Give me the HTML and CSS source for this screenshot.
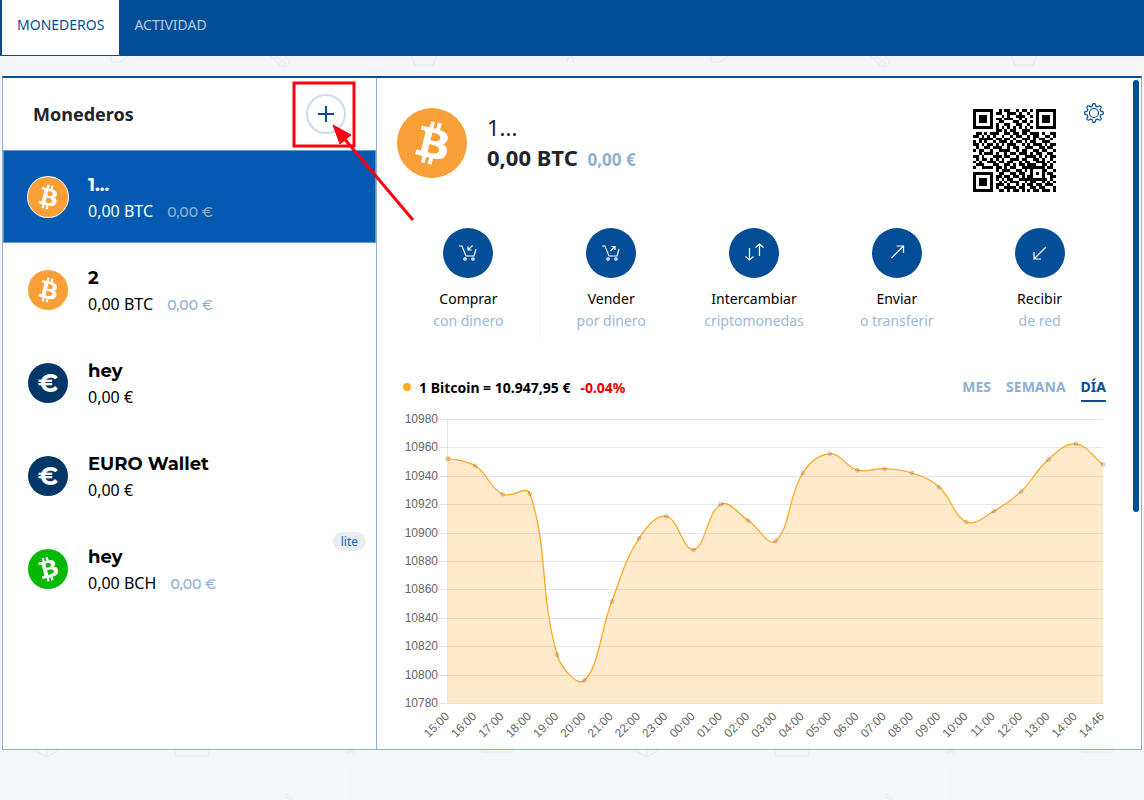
FILE: index.html
```html
<!DOCTYPE html>
<html lang="es">
<head>
    <title>Monederos</title>
    <meta charset="UTF-8">
    <meta name="viewport" content="width=device-width, initial-scale=1.0">
    <link rel="stylesheet" href="styles.css">
</head>
<body>
    <svg class="backdrop" aria-hidden="true">
        <defs>
            <pattern id="doodles" width="600" height="800" patternUnits="userSpaceOnUse">
                <g fill="none" stroke="#e2e9f3" stroke-width="1">
                    <path d="M111 50v12h6q9 0 11-8"/>
                    <path d="M268 54l14 13M272 52l14 12M282 67q6 0 8-6l-8-8M274 60l3-3M278 64l3-3M282 66l3-3"/>
                    <path d="M412 50v9l3 6h18l3-6v-9"/>
                    <path d="M566 59l5-3 6 3M569 57l-2 5M572 57l2 6"/>
                    <path d="M32 749l15 8 13-8M47 749v8"/>
                    <path d="M175 749v4q0 3 4 3h30v-8"/>
                    <path d="M346 754l5-4 6 4M349 750l1 4M352 752l2 5"/>
                    <path d="M482 749v3h31v-3"/>
                    <path d="M285 794q5 0 7 6M285 797q3 0 4 3"/>
                    <path d="M350 764v36M435 750l50 50" stroke-dasharray="1 3"/>
                </g>
            </pattern>
        </defs>
        <rect width="100%" height="100%" fill="url(#doodles)"/>
    </svg>

    <svg class="symbols" aria-hidden="true">
        <symbol id="btc" viewBox="0 0 32 32">
            <path fill="#fff" fill-rule="evenodd" d="M23.189 14.02c.314-2.096-1.283-3.223-3.465-3.975l.708-2.84-1.728-.43-.69 2.765c-.454-.114-.92-.22-1.385-.326l.695-2.783L15.596 6l-.708 2.839c-.376-.086-.746-.17-1.104-.26l.002-.009-2.384-.595-.46 1.846s1.283.294 1.256.312c.7.175.826.638.805 1.006l-.806 3.235c.048.012.11.03.18.057l-.183-.045-1.13 4.532c-.086.212-.303.531-.793.41.018.025-1.256-.313-1.256-.313l-.858 1.978 2.25.561c.418.105.828.215 1.231.318l-.715 2.872 1.727.43.708-2.84c.472.127.93.245 1.378.357l-.706 2.828 1.728.43.715-2.866c2.948.558 5.164.333 6.097-2.333.752-2.146-.037-3.385-1.588-4.192 1.13-.26 1.98-1.003 2.207-2.538zm-3.95 5.538c-.533 2.147-4.148.986-5.32.695l.95-3.805c1.172.293 4.929.872 4.37 3.11zm.535-5.569c-.487 1.953-3.495.96-4.47.717l.86-3.45c.975.243 4.118.696 3.61 2.733z"/>
        </symbol>
        <symbol id="cart" viewBox="0 0 20 20">
            <path d="M1 3h3l4 10h8l2-7"/>
            <circle cx="7" cy="16" r="1.2"/>
            <circle cx="15" cy="16" r="1.2"/>
        </symbol>
    </svg>

    <header class="topbar">
        <nav class="tabs">
            <a href="#monederos" class="tab active">MONEDEROS</a>
            <a href="#actividad" class="tab">ACTIVIDAD</a>
        </nav>
    </header>

    <main class="panel">
        <aside class="sidebar">
            <div class="sidebar-header">
                <h1>Monederos</h1>
                <button class="add-button" aria-label="Añadir monedero">
                    <svg width="16" height="16" viewBox="0 0 16 16"><path d="M8 0v16M0 8h16"/></svg>
                </button>
            </div>
            <ul class="wallet-list">
                <li>
                    <a href="#w1" class="wallet active">
                        <span class="coin btc"><svg><use href="#btc"/></svg></span>
                        <span class="wallet-info">
                            <span class="wallet-name">1...</span>
                            <span class="wallet-amount">0,00 BTC <span class="fiat">0,00 €</span></span>
                        </span>
                    </a>
                </li>
                <li>
                    <a href="#w2" class="wallet">
                        <span class="coin btc"><svg><use href="#btc"/></svg></span>
                        <span class="wallet-info">
                            <span class="wallet-name">2</span>
                            <span class="wallet-amount">0,00 BTC <span class="fiat">0,00 €</span></span>
                        </span>
                    </a>
                </li>
                <li>
                    <a href="#w3" class="wallet">
                        <span class="coin eur">€</span>
                        <span class="wallet-info">
                            <span class="wallet-name">hey</span>
                            <span class="wallet-amount">0,00 €</span>
                        </span>
                    </a>
                </li>
                <li>
                    <a href="#w4" class="wallet">
                        <span class="coin eur">€</span>
                        <span class="wallet-info">
                            <span class="wallet-name">EURO Wallet</span>
                            <span class="wallet-amount">0,00 €</span>
                        </span>
                    </a>
                </li>
                <li>
                    <a href="#w5" class="wallet">
                        <span class="coin bch"><svg><use href="#btc"/></svg></span>
                        <span class="wallet-info">
                            <span class="wallet-name">hey</span>
                            <span class="wallet-amount">0,00 BCH <span class="fiat">0,00 €</span></span>
                        </span>
                        <span class="badge">lite</span>
                    </a>
                </li>
            </ul>
        </aside>

        <section class="detail">
            <div class="summary">
                <span class="coin btc large"><svg><use href="#btc"/></svg></span>
                <div class="summary-info">
                    <h2>1...</h2>
                    <p class="balance">0,00 BTC <span class="fiat">0,00 €</span></p>
                </div>
                <svg class="qr" id="qr" viewBox="0 0 29 29" role="img" aria-label="QR"></svg>
                <button class="gear" aria-label="Ajustes">
                    <svg width="20" height="20" viewBox="0 0 20 20"><path id="gearPath"/><circle cx="10" cy="10" r="4.5"/></svg>
                </button>
            </div>

            <div class="actions">
                <button class="action">
                    <span class="action-icon">
                        <svg width="20" height="20" viewBox="0 0 20 20"><use href="#cart"/><path d="M14.500 2.500L10 7M10 3.500V7h3.500"/></svg>
                    </span>
                    Comprar<small>con dinero</small>
                </button>
                <button class="action">
                    <span class="action-icon">
                        <svg width="20" height="20" viewBox="0 0 20 20"><use href="#cart"/><path d="M9.500 8L14 3.500M10.500 3.500H14V7"/></svg>
                    </span>
                    Vender<small>por dinero</small>
                </button>
                <button class="action">
                    <span class="action-icon">
                        <svg width="20" height="20" viewBox="0 0 20 20"><path d="M5.500 5v12M1.500 13.500l4 3.500 4-3.500M15.500 13V1M11.500 4.500l4-3.500 4 3.500"/></svg>
                    </span>
                    Intercambiar<small>criptomonedas</small>
                </button>
                <button class="action">
                    <span class="action-icon">
                        <svg width="20" height="20" viewBox="0 0 20 20"><path d="M4.500 15L16.500 3M9.500 3h7v7"/></svg>
                    </span>
                    Enviar<small>o transferir</small>
                </button>
                <button class="action">
                    <span class="action-icon">
                        <svg width="20" height="20" viewBox="0 0 20 20"><path d="M16 4L4 16M4 9v7h7"/></svg>
                    </span>
                    Recibir<small>de red</small>
                </button>
            </div>

            <div class="chart-header">
                <span class="dot"></span>
                <span class="rate">1 Bitcoin = 10.947,95 €</span>
                <span class="change">-0.04%</span>
                <div class="periods">
                    <button>MES</button>
                    <button>SEMANA</button>
                    <button class="active">DÍA</button>
                </div>
            </div>
            <svg class="chart" id="chart"></svg>
            <div class="scroll-thumb"></div>
        </section>

        <svg class="callout" aria-hidden="true" width="130" height="150" viewBox="0 0 130 150">
            <rect x="5" y="5" width="60" height="63"/>
            <path d="M124 142L53 58"/>
            <path class="callout-head" d="M44 47l18 10-11 9z"/>
        </svg>
    </main>
    <script src="script.js"></script>
</body>
</html>
```
FILE: styles.css
```css
* {
    box-sizing: border-box;
}
body {
    margin: 0;
    background: #f4f6fa;
    color: #000;
    font-family: "Noto Sans", "Open Sans", sans-serif;
    font-size: 14px;
}
button {
    padding: 0;
    border: none;
    background: none;
    color: inherit;
    font: inherit;
    cursor: pointer;
}
a {
    color: inherit;
    text-decoration: none;
}
.backdrop {
    position: fixed;
    top: 0;
    left: 0;
    width: 100%;
    height: 100%;
    z-index: -1;
}
.symbols {
    display: none;
}

/* top bar */
.topbar {
    background: #044e98;
    padding: 0 2px 1px;
}
.tabs {
    display: flex;
}
.tab {
    height: 55px;
    padding: 0 15px;
    line-height: 50px;
    color: #b3cae0;
}
.tab.active {
    background: #fff;
    color: #044e98;
}

.panel {
    position: relative;
    display: flex;
    margin: 20px 2px 50px;
    background: #fff;
    border: 1px solid #8fb0d0;
    border-top: 2px solid #044e98;
}

/* wallets */
.sidebar {
    width: 374px;
    flex-shrink: 0;
    border-right: 1px solid #8fb0d0;
}
.sidebar-header {
    display: flex;
    align-items: center;
    justify-content: space-between;
    height: 72px;
    padding: 0 30px;
}
h1 {
    margin: 0;
    color: #212529;
    font-size: 18px;
    font-weight: 700;
}
.add-button {
    display: flex;
    align-items: center;
    justify-content: center;
    width: 40px;
    height: 40px;
    border: 2px solid #cddcea;
    border-radius: 50%;
}
.add-button svg {
    stroke: #044e98;
    stroke-width: 2;
}
.wallet-list {
    margin: 0;
    padding: 0;
    list-style: none;
}
.wallet {
    position: relative;
    display: flex;
    align-items: center;
    gap: 20px;
    height: 93px;
    padding: 0 24px;
    border: 1px solid transparent;
}
.wallet.active {
    background: #0459b0;
    border-color: #5f9bd6;
    color: #fff;
}
.coin {
    display: flex;
    align-items: center;
    justify-content: center;
    width: 40px;
    height: 40px;
    flex-shrink: 0;
    border-radius: 50%;
}
.coin svg {
    width: 40px;
    height: 40px;
}
.coin.btc {
    background: #f99f37;
}
.coin.eur {
    background: #033767;
    color: #fff;
    font-family: Montserrat, Inter, sans-serif;
    font-size: 25px;
    font-weight: 700;
    line-height: 40px;
}
.coin.bch {
    background: #04b804;
}
.coin.bch svg {
    transform: rotate(-28deg);
}
.wallet.active .coin {
    box-shadow: 0 0 0 1px #fff;
}
.coin.large, .coin.large svg {
    width: 70px;
    height: 70px;
}
.wallet-info {
    display: flex;
    flex-direction: column;
    padding-top: 3px;
}
.wallet-name {
    font-family: Montserrat, Inter, sans-serif;
    font-size: 18px;
    font-weight: 700;
    line-height: 26px;
}
.wallet-amount {
    font-size: 16px;
    line-height: 26px;
}
.wallet-amount .fiat {
    margin-left: 10px;
    font-family: Montserrat, Inter, sans-serif;
    font-size: 14px;
    font-weight: 500;
}
.fiat {
    color: #8fafd2;
}
.badge {
    position: absolute;
    top: 9px;
    right: 9px;
    padding: 0 8px;
    border-radius: 10px;
    background: #e8edf3;
    color: #2462a5;
    font-size: 12px;
    line-height: 19px;
}

/* selected wallet */
.detail {
    position: relative;
    flex: 1;
    min-width: 0;
    padding: 30px 30px 0 20px;
}
.summary {
    display: flex;
    height: 120px;
}
.summary-info {
    flex: 1;
    padding: 4px 0 0 20px;
    color: #212529;
}
.summary h2, .balance {
    margin: 0;
    font-size: 22px;
    line-height: 30px;
}
.summary h2 {
    font-weight: 400;
}
.balance {
    font-weight: 700;
}
.balance .fiat {
    margin-left: 4px;
    font-size: 17px;
}
.qr {
    width: 83px;
    height: 83px;
    margin: 1px 28px 0 0;
}
.gear {
    width: 20px;
    height: 20px;
    margin: -5px 7px 0 0;
}
.gear svg {
    display: block;
    fill: none;
    stroke: #044e98;
    stroke-width: 1.2;
}
.actions {
    display: grid;
    grid-template-columns: repeat(5, 1fr);
}
.action {
    display: flex;
    flex-direction: column;
    align-items: center;
    line-height: 22px;
}
.action:first-child {
    background: linear-gradient(#f3f3f3, #f3f3f3) right bottom / 1px 88px no-repeat;
    padding-bottom: 6px;
}
.action small {
    color: #9ab8d8;
    font-size: 14px;
}
.action-icon {
    display: flex;
    align-items: center;
    justify-content: center;
    width: 50px;
    height: 50px;
    margin-bottom: 10px;
    border-radius: 50%;
    background: #044e98;
}
.action-icon svg {
    fill: none;
    stroke: #fff;
    stroke-width: 1.2;
}

/* chart */
.chart-header {
    display: flex;
    align-items: center;
    margin: 34px 5px 0 6px;
    height: 30px;
    font-weight: 700;
}
.dot {
    width: 8px;
    height: 8px;
    margin-right: 8px;
    border-radius: 50%;
    background: #ffae19;
}
.change {
    margin-left: 10px;
    color: #e60000;
}
.periods {
    display: flex;
    gap: 15px;
    margin-left: auto;
}
.periods button {
    height: 30px;
    border-bottom: 2px solid transparent;
    color: #8fafd2;
    font-weight: 700;
}
.periods .active {
    border-color: #044e98;
    color: #044e98;
}
.chart {
    display: block;
    width: 100%;
    height: 347px;
}
.chart text {
    fill: #666;
    font-family: "Liberation Sans", Arial, sans-serif;
    font-size: 12px;
    text-anchor: end;
}
.grid {
    stroke: rgba(0, 0, 0, 0.1);
}
.area {
    fill: rgba(255, 159, 25, 0.22);
}
.line {
    fill: none;
    stroke: #ffa319;
    stroke-width: 1.2;
}
.point {
    fill: rgba(0, 0, 0, 0.1);
    stroke: rgba(0, 0, 0, 0.15);
}
.point.first {
    stroke: #ffa319;
}
.scroll-thumb {
    position: absolute;
    top: 2px;
    right: 2px;
    width: 6px;
    height: 432px;
    border-radius: 3px;
    background: #044e98;
}

.callout {
    position: absolute;
    top: 0;
    left: 286px;
    fill: none;
    stroke: #ff0010;
    stroke-width: 3;
    pointer-events: none;
}
.callout-head {
    fill: #ff0010;
    stroke-width: 1;
}
```
FILE: script.js
```js
const NS = 'http://www.w3.org/2000/svg';

function add(parent, tag, attrs, text) {
    const el = document.createElementNS(NS, tag);
    for (const key in attrs) el.setAttribute(key, attrs[key]);
    if (text) el.textContent = text;
    parent.appendChild(el);
    return el;
}

// price by hour
const prices = [
    ['15:00', 10952], ['16:00', 10947], ['17:00', 10927], ['18:00', 10927.5], ['19:00', 10814],
    ['20:00', 10796], ['21:00', 10851.5], ['22:00', 10896], ['23:00', 10911.5], ['00:00', 10888],
    ['01:00', 10920], ['02:00', 10908.5], ['03:00', 10894], ['04:00', 10942], ['05:00', 10955.5],
    ['06:00', 10944], ['07:00', 10945], ['08:00', 10942], ['09:00', 10932], ['10:00', 10907.5],
    ['11:00', 10915], ['12:00', 10929], ['13:00', 10951.5], ['14:00', 10962.5], ['14:46', 10948]
];

function drawChart() {
    const svg = document.getElementById('chart');
    const width = svg.clientWidth;
    const left = 51;
    const right = width - 8;
    const top = 17;
    const bottom = 301;
    const y = v => bottom - (v - 10780) / 200 * (bottom - top);
    const step = (right - left) / (prices.length - 1);
    svg.textContent = '';

    for (let v = 10780; v <= 10980; v += 20) {
        const gy = Math.round(y(v)) + 0.5;
        add(svg, 'line', { class: 'grid', x1: left - 10, y1: gy, x2: right, y2: gy });
        add(svg, 'text', { x: left - 10, y: gy + 3.5 }, String(v));
    }
    add(svg, 'line', { class: 'grid', x1: left - 0.5, y1: top, x2: left - 0.5, y2: bottom });

    const pts = prices.map((p, i) => ({ x: left + i * step, y: y(p[1]) }));
    let d = `M${pts[0].x} ${pts[0].y}`;
    let prev = pts[0];
    for (let i = 1; i < pts.length; i++) {
        const p = pts[i];
        const next = pts[i + 1] || p;
        const before = pts[i - 1];
        const d1 = Math.hypot(p.x - before.x, p.y - before.y);
        const d2 = Math.hypot(next.x - p.x, next.y - p.y);
        const a = 0.4 * d1 / (d1 + d2);
        const b = 0.4 * d2 / (d1 + d2);
        const dx = next.x - before.x;
        const dy = next.y - before.y;
        d += `C${prev.x} ${prev.y} ${p.x - a * dx} ${p.y - a * dy} ${p.x} ${p.y}`;
        prev = { x: p.x + b * dx, y: p.y + b * dy };
    }
    add(svg, 'path', { class: 'area', d: `${d}V${bottom}H${left}Z` });
    add(svg, 'path', { class: 'line', d });

    pts.forEach((p, i) => {
        add(svg, 'circle', { class: i ? 'point' : 'point first', cx: p.x, cy: p.y, r: 2 });
        add(svg, 'text', {
            transform: `translate(${p.x + 2} ${bottom + 14}) rotate(-45)`
        }, prices[i][0]);
    });
}

const qrRows = [
    '11111110010110010110101111111',
    '10000010110011101001001000001',
    '10111010001010011100101011101',
    '10111010110111001010001011101',
    '10111010011000110110101011101',
    '10000010100110011001001000001',
    '11111110101010101010101111111',
    '00000000110101100111000000000',
    '01101011100110110110111010011',
    '11010101001001011001011001101',
    '00111110110110100111010110010',
    '10101001011101011010110011100',
    '11010110101011100101011101011',
    '01001101110010110011100110110',
    '10110010011110010110011011001',
    '00101110100101101110101100110',
    '11010001110110010011110101011',
    '01011010101001110110011010010',
    '10100111011011001011001110101',
    '01110001100110101101110011010',
    '10011110110101100111111110110',
    '00000000101110011010100011001',
    '11111110011001101100101010110',
    '10000010110110110101100010011',
    '10111010101011001111111111010',
    '10111010010101110010110010101',
    '10111010111010010101101101110',
    '10000010100111101100110110001',
    '11111110011010110101011011101'
];

function drawQr() {
    let d = '';
    qrRows.forEach((row, y) => {
        [...row].forEach((c, x) => {
            if (c === '1') d += `M${x} ${y}h1v1h-1z`;
        });
    });
    add(document.getElementById('qr'), 'path', { d, 'shape-rendering': 'crispEdges' });
}

// eight rounded teeth
function drawGear() {
    let d = '';
    for (let i = 0; i <= 96; i++) {
        const t = i / 96 * Math.PI * 2;
        const r = 8.1 + Math.max(-1, Math.min(1, 1.6 * Math.cos(8 * t))) * 1.2;
        d += (i ? 'L' : 'M') + (10 + r * Math.cos(t)) + ' ' + (10 + r * Math.sin(t));
    }
    document.getElementById('gearPath').setAttribute('d', d + 'Z');
}

drawQr();
drawGear();
drawChart();
window.addEventListener('resize', drawChart);
```
